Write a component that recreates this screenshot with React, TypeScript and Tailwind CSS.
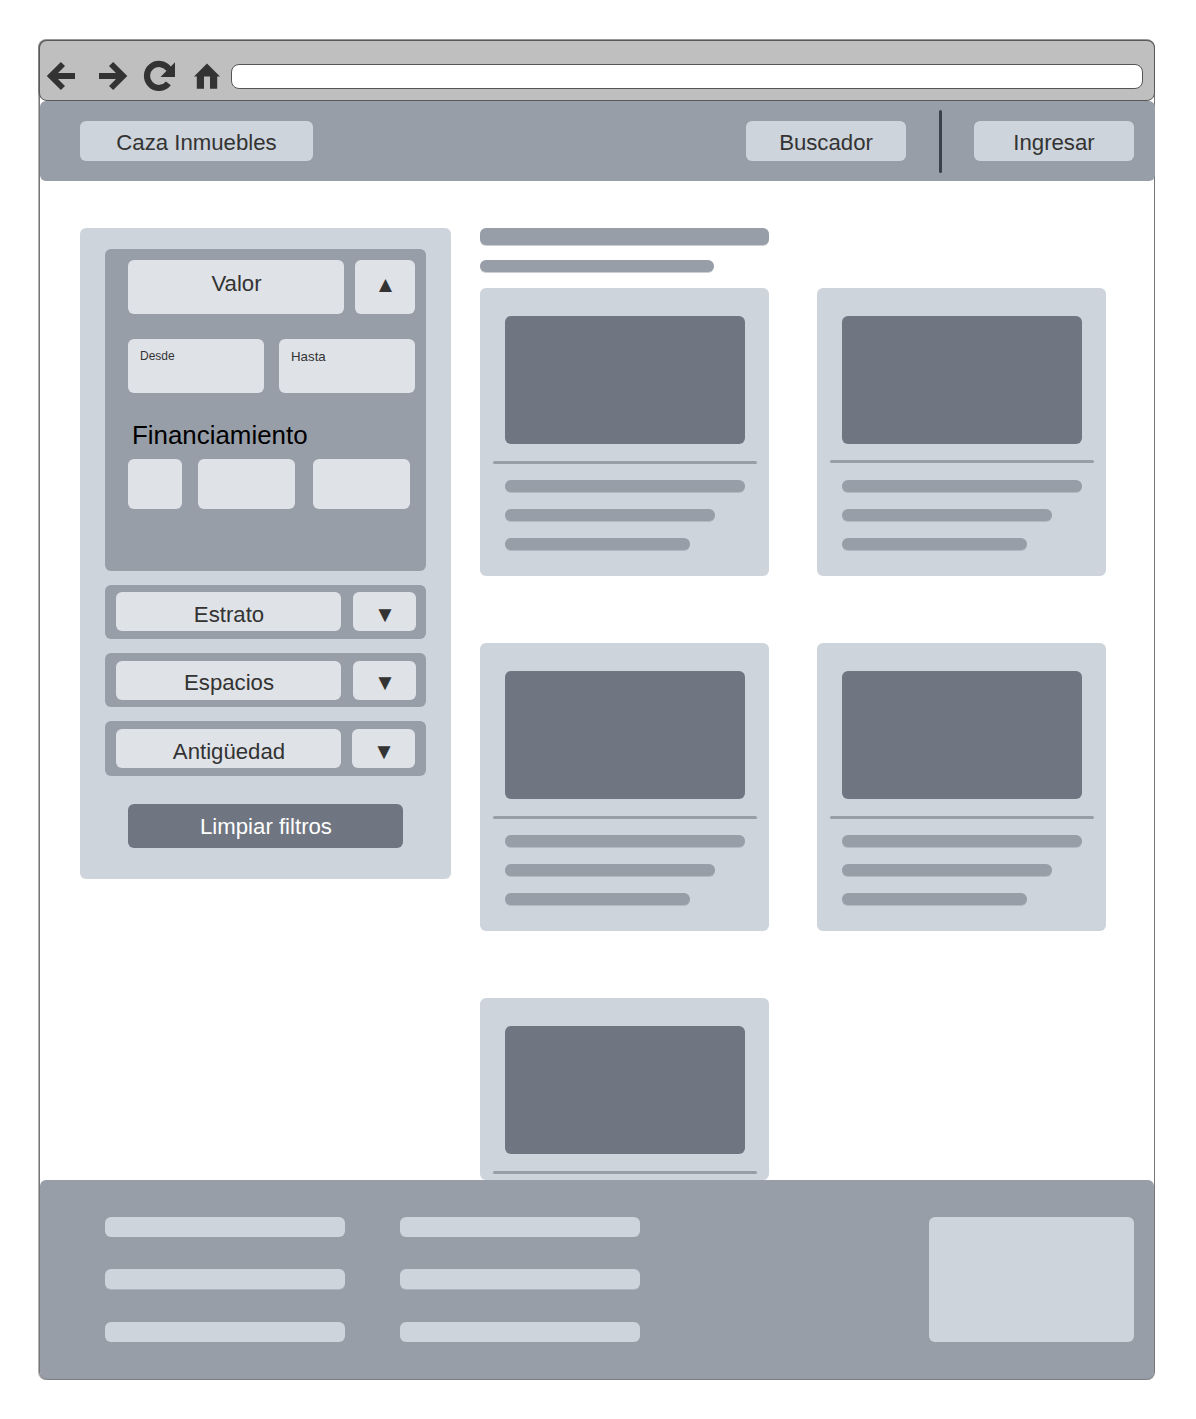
import type { ReactNode } from "react";

function Box({ className = "", children }: { className?: string; children?: ReactNode }) {
  return <div className={`shrink-0 rounded-[6px] ${className}`}>{children}</div>;
}

function BrowserBar() {
  return (
    <div className="flex h-[61px] w-[1116px] shrink-0 items-start rounded-[8px] border border-[#585858] bg-[#bfbfbf] shadow-[-1px_-1px_0_0_rgba(51,51,51,0.35),0_-1px_0_0_rgba(51,51,51,0.25)]">
      <svg className="h-[58px] w-[191px] shrink-0" viewBox="40 41 191 58" fill="#333333">
        <path d="M46.8 76 60.9 62 65 66.1 58 73.1H75V79H58L65 86 60.9 90.1Z" />
        <path d="M127.3 76 113.2 62 109 66.1 116 73.1H99V79H116L109 86 113.2 90.1Z" />
        <path
          d="M168.4 83.4A12 12 0 1 1 169 69.4"
          fill="none"
          stroke="#333333"
          strokeWidth="6.2"
        />
        <path d="M175 62.2V77H160.5Z" />
        <path d="M207 63.4 220 76.4H217.2V88.7H210V76.4H204V88.7H196.8V76.4H194Z" />
      </svg>
      <div className="mt-[23px] h-[25px] w-[912px] rounded-[8px] border border-[#555555] bg-white" />
    </div>
  );
}

function NavBar() {
  return (
    <header className="ml-px flex h-20 w-[1115px] shrink-0 items-start rounded-[6px] bg-[#979ea8] pl-10 text-[22.2px]">
      <Box className="mt-5 h-10 w-[233px] bg-[#cdd4dc] pt-[3px] text-center">Caza Inmuebles</Box>
      <Box className="mt-5 ml-[433px] h-10 w-[160px] bg-[#cdd4dc] pt-[3px] text-center">Buscador</Box>
      <div className="mt-[9px] ml-[33px] h-[63px] w-[3px] rounded-full bg-[#3a414a]" />
      <Box className="mt-5 ml-8 h-10 w-[160px] bg-[#cdd4dc] pt-[3px] text-center">Ingresar</Box>
    </header>
  );
}

function FilterRow({
  label,
  rowClass,
  textClass,
  arrowClass,
}: {
  label: string;
  rowClass: string;
  textClass: string;
  arrowClass: string;
}) {
  return (
    <Box className={`flex w-[321px] bg-[#979ea8] pl-[11px] ${rowClass}`}>
      <Box className={`h-[39px] w-[225px] bg-[#dfe2e7] pl-px text-center ${textClass}`}>{label}</Box>
      <Box className={`h-[39px] w-[63px] bg-[#dfe2e7] pl-px text-center ${textClass} ${arrowClass}`}>▼</Box>
    </Box>
  );
}

function Filters() {
  return (
    <aside className="flex h-[651px] w-[371px] shrink-0 flex-col rounded-[6px] bg-[#cdd4dc] pt-[21px] pl-[25px] text-[22.2px]">
      <Box className="h-[322px] w-[321px] bg-[#979ea8] pt-[11px] pl-[23px]">
        <div className="flex gap-[11px]">
          <Box className="h-[54px] w-[216px] bg-[#dfe2e7] pt-[5px] pl-px text-center">Valor</Box>
          <Box className="h-[54px] w-[60px] bg-[#dfe2e7] pt-[6px] pl-px text-center">▲</Box>
        </div>
        <div className="mt-[25px] flex gap-[15px] leading-[18px]">
          <Box className="h-[54px] w-[136px] bg-[#dfe2e7] pt-2 pl-3 text-[12px]">Desde</Box>
          <Box className="h-[54px] w-[136px] bg-[#dfe2e7] pt-[9px] pl-3 text-[13.3px]">Hasta</Box>
        </div>
        <h2 className="mt-[24px] pl-1 text-[25.9px] leading-[36px] text-black">Financiamiento</h2>
        <div className="mt-[6px] flex">
          <Box className="h-[50px] w-[54px] bg-[#dfe2e7]" />
          <Box className="ml-4 h-[50px] w-[97px] bg-[#dfe2e7]" />
          <Box className="ml-[18px] h-[50px] w-[97px] bg-[#dfe2e7]" />
        </div>
      </Box>
      <FilterRow label="Estrato" rowClass="mt-[14px] h-[54px] pt-[7px]" textClass="pt-1" arrowClass="ml-3" />
      <FilterRow label="Espacios" rowClass="mt-[14px] h-[54px] pt-[8px]" textClass="pt-[3px]" arrowClass="ml-3" />
      <FilterRow label="Antigüedad" rowClass="mt-[14px] h-[55px] pt-[8px]" textClass="pt-1" arrowClass="ml-[11px]" />
      <Box className="mt-[28px] ml-[23px] h-11 w-[275px] bg-[#6f7681] pt-1 pl-px text-center text-white">
        Limpiar filtros
      </Box>
    </aside>
  );
}

function Card({ clipped = false, raised = false }: { clipped?: boolean; raised?: boolean }) {
  return (
    <article
      className={`flex w-[289px] shrink-0 flex-col rounded-[6px] bg-[#cdd4dc] pt-7 pl-[25px] ${
        clipped ? "h-[182px]" : "h-[288px]"
      }`}
    >
      <Box className="h-32 w-60 bg-[#6f7681]" />
      <div
        className={`-ml-3 h-[3px] w-[264px] shrink-0 rounded-full bg-[#979ea8] ${raised ? "mt-4 mb-px" : "mt-[17px]"}`}
      />
      {!clipped && (
        <div className="mt-4 flex flex-col gap-[17px]">
          <Box className="h-3 w-60 bg-[#979ea8] shadow-[0_1px_0_0_rgba(151,158,168,0.5)]" />
          <Box className="h-3 w-[210px] bg-[#979ea8] shadow-[0_1px_0_0_rgba(151,158,168,0.5)]" />
          <Box className="h-3 w-[185px] bg-[#979ea8] shadow-[0_1px_0_0_rgba(151,158,168,0.5)]" />
        </div>
      )}
    </article>
  );
}

function Results() {
  return (
    <section className="ml-[29px] flex flex-col items-start">
      <Box className="h-[17px] w-[289px] bg-[#979ea8] shadow-[0_1px_0_0_rgba(151,158,168,0.5)]" />
      <Box className="mt-[15px] h-[12px] w-[234px] bg-[#979ea8] shadow-[0_1px_0_0_rgba(151,158,168,0.5)]" />
      <div className="mt-4 grid grid-cols-[289px_289px] gap-x-12 gap-y-[67px]">
        <Card />
        <Card raised />
        <Card />
        <Card />
        <Card clipped />
      </div>
    </section>
  );
}

function LinkColumn() {
  return (
    <div className="flex shrink-0 flex-col pt-[37px]">
      <Box className="h-5 w-60 bg-[#cdd4dc]" />
      <Box className="mt-[32px] h-5 w-60 bg-[#cdd4dc] shadow-[0_1px_0_0_rgba(205,212,220,0.4)]" />
      <Box className="mt-[33px] h-5 w-60 bg-[#cdd4dc]" />
    </div>
  );
}

function Footer() {
  return (
    <footer className="flex h-[200px] w-full shrink-0 items-start rounded-[6px] rounded-b-[8px] border-b border-[#7d7d86] bg-[#979ea8] pl-[65px]">
      <LinkColumn />
      <div className="ml-[55px]">
        <LinkColumn />
      </div>
      <Box className="mt-[37px] ml-[289px] h-[125px] w-[205px] bg-[#cdd4dc]" />
    </footer>
  );
}

export default function App() {
  return (
    <div className="h-[1419px] w-[1196px] overflow-hidden bg-white pt-10 pl-[39px] font-['Liberation_Sans',Arial,sans-serif] leading-[38px] text-[#333333]">
      <div className="flex h-[1340px] w-[1116px] flex-col rounded-[8px] shadow-[inset_1px_0_0_0_#777777,inset_-1px_0_0_0_#777777,-1px_0_0_0_#b0b0b0]">
        <BrowserBar />
        <NavBar />
        <main className="flex min-h-0 flex-1 items-start pt-[47px] pl-[41px]">
          <Filters />
          <Results />
        </main>
        <div className="px-px">
          <Footer />
        </div>
      </div>
    </div>
  );
}
